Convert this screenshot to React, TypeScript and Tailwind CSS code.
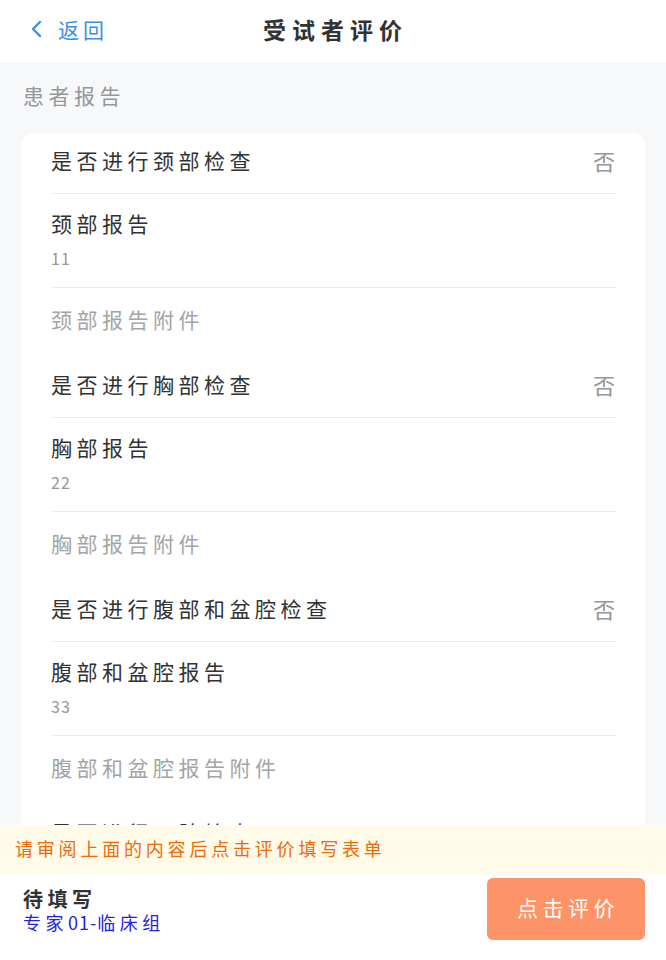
import React from "react";

type Group = {
  question: string;
  answer: string;
  report: string;
  value: string;
  attachment: string;
};

const groups: Group[] = [
  { question: "是否进行颈部检查", answer: "否", report: "颈部报告", value: "11", attachment: "颈部报告附件" },
  { question: "是否进行胸部检查", answer: "否", report: "胸部报告", value: "22", attachment: "胸部报告附件" },
  { question: "是否进行腹部和盆腔检查", answer: "否", report: "腹部和盆腔报告", value: "33", attachment: "腹部和盆腔报告附件" },
  { question: "是否进行四肢检查", answer: "否", report: "四肢报告", value: "44", attachment: "四肢报告附件" },
];

function QuestionRow({ label, answer, first }: { label: string; answer: string; first?: boolean }) {
  return (
    <div className={first ? "h-[61px] px-[29px] flex" : "h-[64px] px-[29px] flex"}>
      <div
        className={
          first
            ? "flex-1 flex items-center justify-between border-b border-[#ebedf0] pr-[1px] pb-[6px]"
            : "flex-1 flex items-center justify-between border-b border-[#ebedf0] pr-[1px] pb-[3px]"
        }
      >
        <span className="text-[21px] tracking-[4.5px] text-[#323233] leading-[28px]">{label}</span>
        <span className="text-[22px] text-[#969799] leading-[28px]">{answer}</span>
      </div>
    </div>
  );
}

function ReportRow({ label, value }: { label: string; value: string }) {
  return (
    <div className="px-[29px] flex">
      <div className="flex-1 border-b border-[#ebedf0] pt-[13px] pb-[17px]">
        <div className="h-[32px] leading-[32px] text-[21px] tracking-[4.5px] text-[#323233]">{label}</div>
        <div className="mt-[7px] h-[24px] leading-[24px] text-[16px] tracking-[1px] text-[#969799]">{value}</div>
      </div>
    </div>
  );
}

function AttachmentRow({ label }: { label: string }) {
  return (
    <div className="h-[66px] px-[29px] pb-[4px] flex items-center">
      <span className="text-[21px] tracking-[4.5px] text-[#a3a4a6] leading-[28px]">{label}</span>
    </div>
  );
}

export default function App() {
  return (
    <div className="h-[960px] w-full flex flex-col overflow-hidden bg-[#f7f8fa] font-['Noto_Sans_CJK_SC','Noto_Sans',sans-serif]">
      {/* Header */}
      <header className="h-[62px] shrink-0 bg-white grid grid-cols-[1fr_auto_1fr] items-center pb-[5px]">
        <div className="flex items-center pl-[29px] text-[#3a8ee8]">
          <svg width="15" height="18" viewBox="0 0 15 18" fill="none">
            <path d="M11 2 L4 9 L11 16" stroke="currentColor" strokeWidth="2.4" strokeLinecap="round" strokeLinejoin="round" />
          </svg>
          <span className="ml-[14px] text-[21px] tracking-[4px] leading-[28px]">返回</span>
        </div>
        <h1 className="pl-[5px] text-[23px] font-bold tracking-[6px] text-[#323233] leading-[30px]">受试者评价</h1>
        <div />
      </header>

      {/* Content */}
      <main className="flex-1 overflow-hidden">
        <div className="pt-[18px] pl-[23px] h-[71px]">
          <div className="h-[30px] leading-[30px] text-[21px] tracking-[4.5px] text-[#969799]">患者报告</div>
        </div>
        <div className="ml-[22px] mr-[21px] rounded-xl bg-white">
          {groups.map((g, i) => (
            <div key={g.question}>
              <QuestionRow label={g.question} answer={g.answer} first={i === 0} />
              <ReportRow label={g.report} value={g.value} />
              <AttachmentRow label={g.attachment} />
            </div>
          ))}
        </div>
      </main>

      {/* Notice */}
      <div className="h-[48px] shrink-0 bg-[#fffbe8] flex items-center pl-[15px] pb-[2px]">
        <span className="text-[18px] tracking-[3.8px] text-[#ed6a0c] leading-[24px]">请审阅上面的内容后点击评价填写表单</span>
      </div>

      {/* Bottom bar */}
      <footer className="h-[87px] shrink-0 bg-white flex items-start justify-between pt-[5px] pl-[23px] pr-[21px]">
        <div className="pt-[8px]">
          <div className="h-[25px] leading-[25px] text-[20px] font-bold tracking-[4.5px] text-[#323233]">待填写</div>
          <div className="h-[23px] leading-[23px] text-[18px] text-[#2323e0]">
            <span className="tracking-[4.5px]">专家</span>
            <span className="tracking-[1px]">01-</span>
            <span className="tracking-[4.5px]">临床组</span>
          </div>
        </div>
        <button className="w-[158px] h-[62px] rounded-[6px] bg-[#fd9366] text-white text-[21px] tracking-[4.5px] pl-[4px] pb-[2px]">
          点击评价
        </button>
      </footer>
    </div>
  );
}
